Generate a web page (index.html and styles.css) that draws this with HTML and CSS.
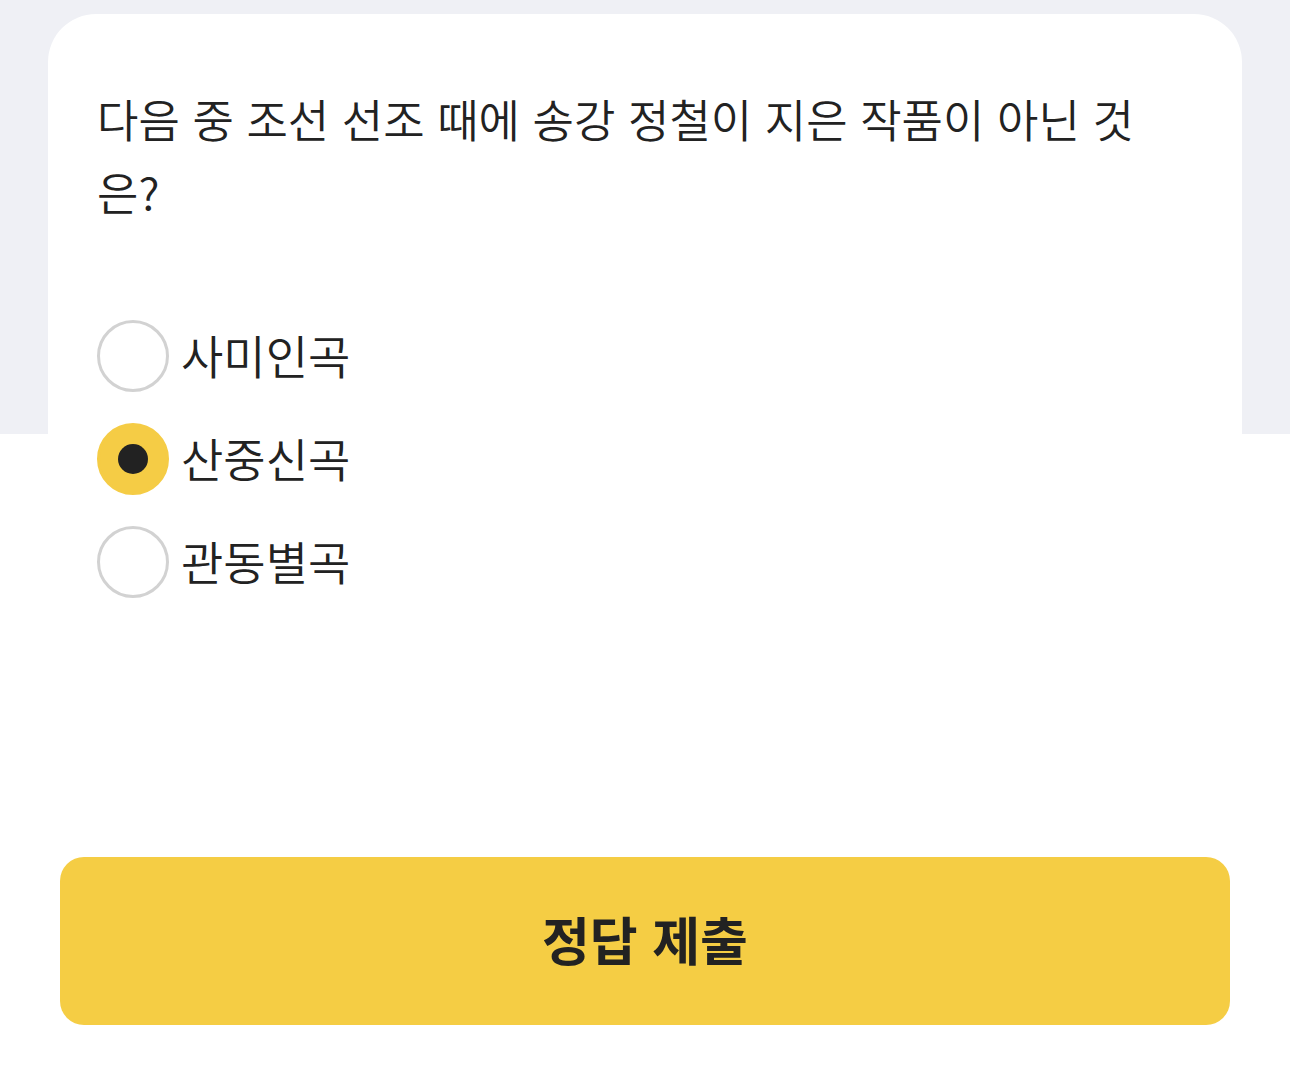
FILE: index.html
```html
<!DOCTYPE html>
<html lang="ko">
<head>
<meta charset="utf-8">
<title>퀴즈</title>
<link rel="stylesheet" href="styles.css">
</head>
<body>
<main class="page">
  <section class="card">
    <p class="question">다음 중 조선 선조 때에 송강 정철이 지은 작품이 아닌 것은?</p>
    <ul class="options">
      <li class="option"><span class="radio"></span><span class="label">사미인곡</span></li>
      <li class="option selected"><span class="radio"><span class="dot"></span></span><span class="label">산중신곡</span></li>
      <li class="option"><span class="radio"></span><span class="label">관동별곡</span></li>
    </ul>
  </section>
  <div class="footer">
    <button class="submit" type="button">정답 제출</button>
  </div>
</main>
</body>
</html>
```
FILE: styles.css
```css
html, body {
  margin: 0;
  padding: 0;
}
body {
  width: 1290px;
  height: 1086px;
  overflow: hidden;
  background: linear-gradient(#eff0f5 0, #eff0f5 434px, #ffffff 434px);
  font-family: "Noto Sans CJK KR", "Noto Sans", sans-serif;
  color: #222222;
}
.page {
  padding-top: 14px;
}
.card {
  margin: 0 48px;
  background: #ffffff;
  border-radius: 48px 48px 0 0;
  padding: 68px 49px 0;
}
.question {
  margin: 0;
  font-size: 45px;
  line-height: 73px;
  font-weight: 350;
}
.options {
  list-style: none;
  margin: 92px 0 0;
  padding: 0;
  display: flex;
  flex-direction: column;
  gap: 31px;
}
.option {
  display: flex;
  align-items: center;
  gap: 12px;
  height: 72px;
}
.radio {
  box-sizing: border-box;
  width: 72px;
  height: 72px;
  border-radius: 50%;
  border: 3px solid #d2d2d2;
  background: #ffffff;
  display: flex;
  align-items: center;
  justify-content: center;
  flex: none;
}
.selected .radio {
  border-color: #f5cc45;
  background: #f5cc45;
}
.dot {
  width: 30px;
  height: 30px;
  border-radius: 50%;
  background: #222222;
}
.label {
  font-size: 46px;
  line-height: 68px;
  padding-bottom: 4px;
  font-weight: 350;
}
.footer {
  padding: 0 60px;
  margin-top: 259px;
}
.submit {
  display: block;
  width: 100%;
  height: 168px;
  border: none;
  border-radius: 24px;
  padding: 0 0 6px;
  background: #f5cd44;
  color: #222222;
  font-family: "Noto Sans CJK KR", "Noto Sans", sans-serif;
  font-size: 52px;
  font-weight: 700;
  cursor: pointer;
}
```
